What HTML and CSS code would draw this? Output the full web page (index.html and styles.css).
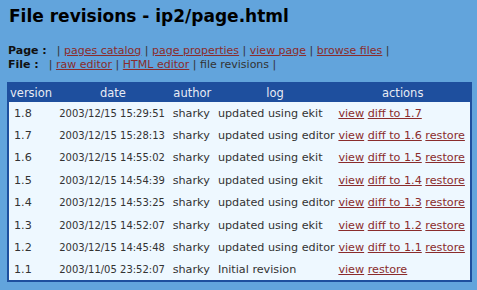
FILE: index.html
```html
<!DOCTYPE html>
<html lang="en">
  <head>
    <meta charset="UTF-8" />
    <title>File revisions</title>
    <link rel="stylesheet" href="styles.css">
  </head>
  <body>
    <h1>File revisions - ip2/page.html</h1>
    <div class="nav">
      <div><b>Page :</b> &nbsp;| <a href="#">pages catalog</a> | <a href="#">page properties</a> | <a href="#">view page</a> | <a href="#">browse files</a> |</div>
      <div><b>File :</b> &nbsp;| <a href="#">raw editor</a> | <a href="#">HTML editor</a> | file revisions |</div>
    </div>
    <table class="revs">
      <tr>
        <th class="c-ver left">version</th>
        <th class="c-date">date</th>
        <th class="c-auth">author</th>
        <th class="c-log">log</th>
        <th class="c-act">actions</th>
      </tr>
      <tr>
        <td class="ver">1.8</td>
        <td class="date">2003/12/15 15:29:51</td>
        <td>sharky</td>
        <td>updated using ekit</td>
        <td><a href="#">view</a> <a href="#">diff to 1.7</a></td>
      </tr>
      <tr>
        <td class="ver">1.7</td>
        <td class="date">2003/12/15 15:28:13</td>
        <td>sharky</td>
        <td>updated using editor</td>
        <td><a href="#">view</a> <a href="#">diff to 1.6</a> <a href="#">restore</a></td>
      </tr>
      <tr>
        <td class="ver">1.6</td>
        <td class="date">2003/12/15 14:55:02</td>
        <td>sharky</td>
        <td>updated using ekit</td>
        <td><a href="#">view</a> <a href="#">diff to 1.5</a> <a href="#">restore</a></td>
      </tr>
      <tr>
        <td class="ver">1.5</td>
        <td class="date">2003/12/15 14:54:39</td>
        <td>sharky</td>
        <td>updated using ekit</td>
        <td><a href="#">view</a> <a href="#">diff to 1.4</a> <a href="#">restore</a></td>
      </tr>
      <tr>
        <td class="ver">1.4</td>
        <td class="date">2003/12/15 14:53:25</td>
        <td>sharky</td>
        <td>updated using editor</td>
        <td><a href="#">view</a> <a href="#">diff to 1.3</a> <a href="#">restore</a></td>
      </tr>
      <tr>
        <td class="ver">1.3</td>
        <td class="date">2003/12/15 14:52:07</td>
        <td>sharky</td>
        <td>updated using ekit</td>
        <td><a href="#">view</a> <a href="#">diff to 1.2</a> <a href="#">restore</a></td>
      </tr>
      <tr>
        <td class="ver">1.2</td>
        <td class="date">2003/12/15 14:45:48</td>
        <td>sharky</td>
        <td>updated using editor</td>
        <td><a href="#">view</a> <a href="#">diff to 1.1</a> <a href="#">restore</a></td>
      </tr>
      <tr>
        <td class="ver">1.1</td>
        <td class="date">2003/11/05 23:52:07</td>
        <td>sharky</td>
        <td>Initial revision</td>
        <td><a href="#">view</a> <a href="#">restore</a></td>
      </tr>
    </table>
  </body>
</html>
```

FILE: styles.css
```css
* {
  margin: 0;
  padding: 0;
  box-sizing: border-box;
}
body {
  background: #62a4dc;
  font-family: "DejaVu Sans", Verdana, sans-serif;
  font-size: 11.2px;
  color: #222;
  padding: 6px 5px 8px 7px;
}
h1 {
  font-size: 17px;
  font-weight: bold;
  color: #000;
  padding: 0 0 18px 2px;
}
.nav {
  color: #333;
  font-size: 11px;
  line-height: 14px;
  padding: 0 0 10px 1px;
}
.nav b {
  color: #111;
  padding-right: 3px;
}
a {
  color: #8a2c2c;
}
.revs {
  width: 465px;
  table-layout: fixed;
  border: 2px solid #1e4f9e;
  border-collapse: collapse;
  background: #eef8ff;
  color: #333;
}
.revs th {
  background: #1e4f9e;
  color: #e8ecf4;
  font-weight: normal;
  font-size: 11.5px;
  height: 19px;
  padding: 0 3px;
}
.revs th.left {
  text-align: left;
  padding-left: 1px;
}
.c-ver { width: 48px; }
.c-date { width: 113px; }
.c-auth { width: 45px; }
.c-log { width: 120px; }
.c-act { width: 135px; }
.revs td {
  height: 22.4px;
  padding: 0 3px;
  white-space: nowrap;
}
.revs td.ver {
  padding-left: 5px;
}
.revs td.date {
  font-size: 10px;
}
```
